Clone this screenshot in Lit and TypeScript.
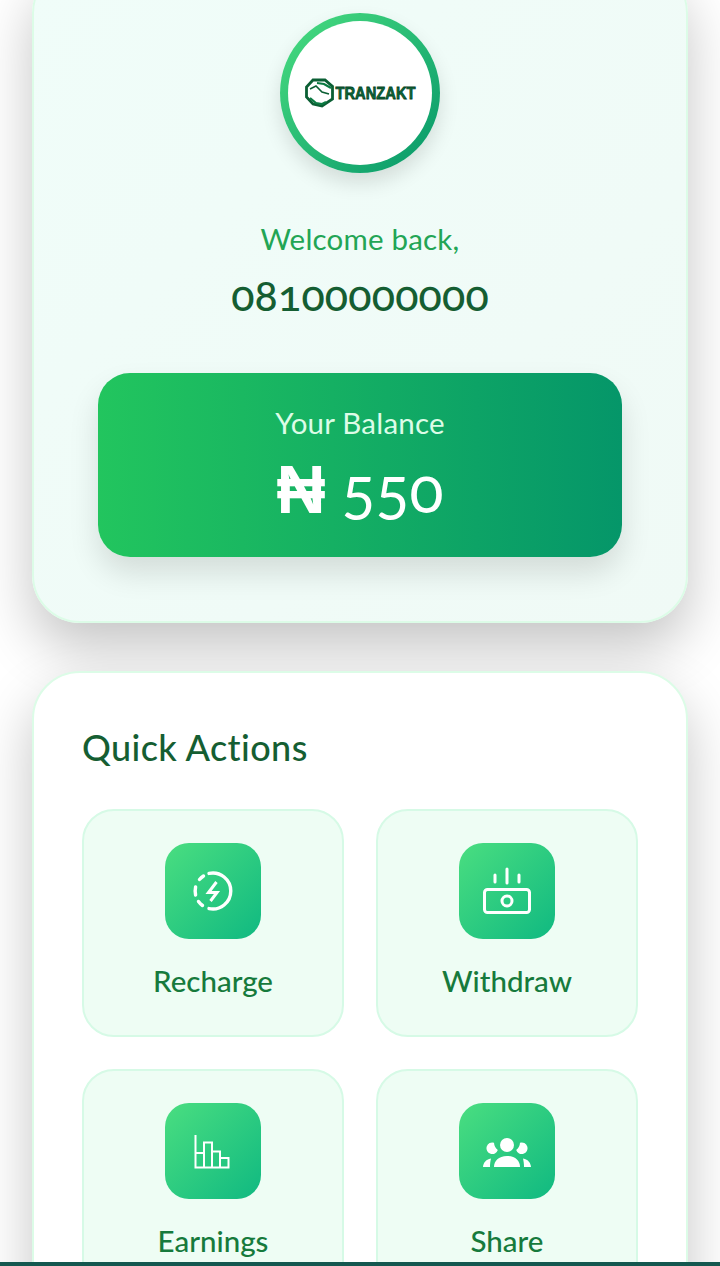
import { LitElement, css, html, svg } from 'lit'
import { customElement } from 'lit/decorators.js'

const arc = (d: string) =>
  svg`<path d=${d} fill="none" stroke="#fff" stroke-width="3.4" stroke-linecap="round" />`

const gradientIcons = {
  recharge: svg`
    ${arc('M20 6.400A18 18 0 1 1 20 41.600')}
    ${arc('M14.500 9A18 18 0 0 0 10.500 12.500')}
    ${arc('M6.600 20A18 18 0 0 0 6.600 28')}
    ${arc('M9.500 34.500A18 18 0 0 0 13.500 38.500')}
    <path d="M27.500 15 19.500 25.500h8.500L21.500 34" fill="none" stroke="#fff" stroke-width="3" />
  `,
  withdraw: svg`
    <rect x="1.500" y="22.500" width="45" height="23" rx="3" fill="none" stroke="#fff" stroke-width="3" />
    <circle cx="24" cy="34" r="5" fill="none" stroke="#fff" stroke-width="3" />
    <path d="M12 8v7M24 2v14M36 8v7" fill="none" stroke="#fff" stroke-width="3" stroke-linecap="round" />
  `,
  earnings: svg`
    <path d="M6.500 8V40.500H39.500V31H31M6.500 26H15M15 40.500V15.500H23V40.500M23 24.500H31V40.500" fill="none" stroke="#fff" stroke-width="2" />
  `,
  share: svg`
    <circle cx="24" cy="18" r="7" fill="#fff" />
    <path d="M14.800 23a5.800 5.800 0 1 1-3.800-7.300a10 10 0 0 0 3.800 7.300zM33.200 23a5.800 5.800 0 1 0 3.800-7.300a10 10 0 0 1-3.800 7.300z" fill="#fff" />
    <path d="M11 40c0-6 4.500-11 13-11S37 34 37 40z" fill="#fff" />
    <path d="M0 40c.4-4 2.500-7.500 8-8.500c-.6 2.500-1 5.500-1 8.500zM48 40c-.4-4-2.500-7.500-8-8.500c.6 2.500 1 5.500 1 8.500z" fill="#fff" />
  `,
}

const actions = [
  { label: 'Recharge', icon: gradientIcons.recharge },
  { label: 'Withdraw', icon: gradientIcons.withdraw },
  { label: 'Earnings', icon: gradientIcons.earnings },
  { label: 'Share', icon: gradientIcons.share },
]

@customElement('app-root')
export class AppRoot extends LitElement {
  render() {
    return html`
      <main class="page">
        <section class="card hero">
          <div class="avatar">
            <div class="avatar-inner">
              <div class="logo">
                <svg viewBox="0 0 29 30" width="29" height="30">
                  <path d="M8 2h12l7.500 6.500V21L17 28 8 26 1.500 19V9z" fill="none" stroke="#0b5f34" stroke-width="2.800" />
                  <path d="M5 11l7-6 7 1 6 4v9l-7 6-6-1-7-5z" fill="#fff" />
                  <path d="M12 5l7 1 7 4M5 20l6 5 6 1 4-2" fill="none" stroke="#0a7a42" stroke-width="2.200" />
                  <path d="M5 11l6-3 6 6 7 2" fill="none" stroke="#0b5f34" stroke-width="1.600" />
                </svg>
                <span class="logo-text">TRANZAKT</span>
              </div>
            </div>
          </div>
          <p class="welcome">Welcome back,</p>
          <h1 class="phone">08100000000</h1>
          <div class="balance">
            <span class="balance-label">Your Balance</span>
            <span class="balance-value"><span class="naira">₦</span> 550</span>
          </div>
        </section>

        <section class="card actions">
          <h2 class="title">Quick Actions</h2>
          <div class="grid">
            ${actions.map(
              (a) => html`
                <button class="tile">
                  <span class="icon-box">
                    <svg viewBox="0 0 48 48" width="48" height="48">${a.icon}</svg>
                  </span>
                  <span class="tile-label">${a.label}</span>
                </button>
              `,
            )}
          </div>
        </section>
      </main>
      <div class="bottom-bar"></div>
    `
  }

  static styles = css`
    :host {
      display: block;
      position: relative;
      height: 1266px;
      overflow: hidden;
      background: #fff;
      font-family: Lato, 'Open Sans', sans-serif;
      font-variant-ligatures: none;
      font-variant-numeric: oldstyle-nums;
    }

    .page {
      display: flex;
      flex-direction: column;
      gap: 48px;
      padding: 0 32px;
      margin-top: -35px;
    }

    .card {
      border: 2px solid #dcfce7;
      border-radius: 48px;
      box-shadow: 0 25px 55px rgba(0, 0, 0, 0.23);
    }

    .hero {
      display: flex;
      flex-direction: column;
      align-items: center;
      padding: 46px 64px 64px;
      background: linear-gradient(135deg, #f0fdf9, #f0faf6);
    }

    .avatar {
      width: 160px;
      height: 160px;
      padding: 8px;
      box-sizing: border-box;
      border-radius: 50%;
      background: linear-gradient(135deg, #4ade80, #059669);
      box-shadow: 0 10px 20px rgba(0, 0, 0, 0.12);
    }

    .avatar-inner {
      display: flex;
      align-items: center;
      justify-content: center;
      height: 100%;
      border-radius: 50%;
      background: #fff;
    }

    .logo {
      display: flex;
      align-items: center;
      gap: 2px;
    }

    .logo svg {
      display: block;
    }

    .logo-text {
      font-family: 'Liberation Sans', sans-serif;
      font-weight: 700;
      font-size: 14.700px;
      line-height: 16px;
      color: #0b6b3a;
      -webkit-text-stroke: 0.7px #063f22;
      transform: scaleY(1.12);
    }

    .welcome {
      margin: 46px 0 0;
      font-size: 29.500px;
      line-height: 40px;
      font-weight: 400;
      letter-spacing: 0.2px;
      color: #22a555;
    }

    .phone {
      margin: 16px 0 0;
      font-size: 43px;
      line-height: 40px;
      font-weight: 500;
      color: #155e32;
      letter-spacing: 0.2px;
    }

    .balance {
      display: flex;
      flex-direction: column;
      align-items: center;
      align-self: stretch;
      margin-top: 58px;
      height: 184px;
      box-sizing: border-box;
      padding-top: 30px;
      border-radius: 32px;
      color: #fff;
      background: linear-gradient(90deg, #22c55e, #059669);
      box-shadow: 0 16px 30px rgba(0, 0, 0, 0.12);
    }

    .balance-label {
      font-size: 29.500px;
      line-height: 40px;
      font-weight: 400;
      letter-spacing: 0.2px;
      color: #dcfce7;
    }

    .balance-value {
      display: flex;
      align-items: baseline;
      gap: 16px;
      margin-top: 13px;
      font-size: 63px;
      line-height: 66px;
      font-weight: 400;
    }

    .naira {
      font-family: 'Liberation Sans', sans-serif;
      font-weight: 700;
      font-size: 68px;
    }

    .actions {
      padding: 48px;
      background: #fff;
    }

    .title {
      margin: 6px 0 42px;
      font-size: 36px;
      line-height: 40px;
      font-weight: 500;
      letter-spacing: 0.4px;
      color: #155e32;
    }

    .grid {
      display: grid;
      grid-template-columns: 1fr 1fr;
      gap: 32px;
    }

    .tile {
      display: flex;
      flex-direction: column;
      align-items: center;
      gap: 22px;
      height: 228px;
      box-sizing: border-box;
      padding: 32px;
      border: 2px solid #d6fae6;
      border-radius: 32px;
      background: #eefdf4;
      font: inherit;
    }

    .icon-box {
      display: flex;
      align-items: center;
      justify-content: center;
      width: 96px;
      height: 96px;
      border-radius: 24px;
      background: linear-gradient(135deg, #4ade80, #10b981);
    }

    .tile-label {
      font-size: 29.500px;
      line-height: 40px;
      font-weight: 500;
      color: #167a3c;
    }

    .bottom-bar {
      position: absolute;
      left: 0;
      right: 0;
      bottom: 0;
      height: 4px;
      background: #14574f;
    }
  `
}

declare global {
  interface HTMLElementTagNameMap {
    'app-root': AppRoot
  }
}
